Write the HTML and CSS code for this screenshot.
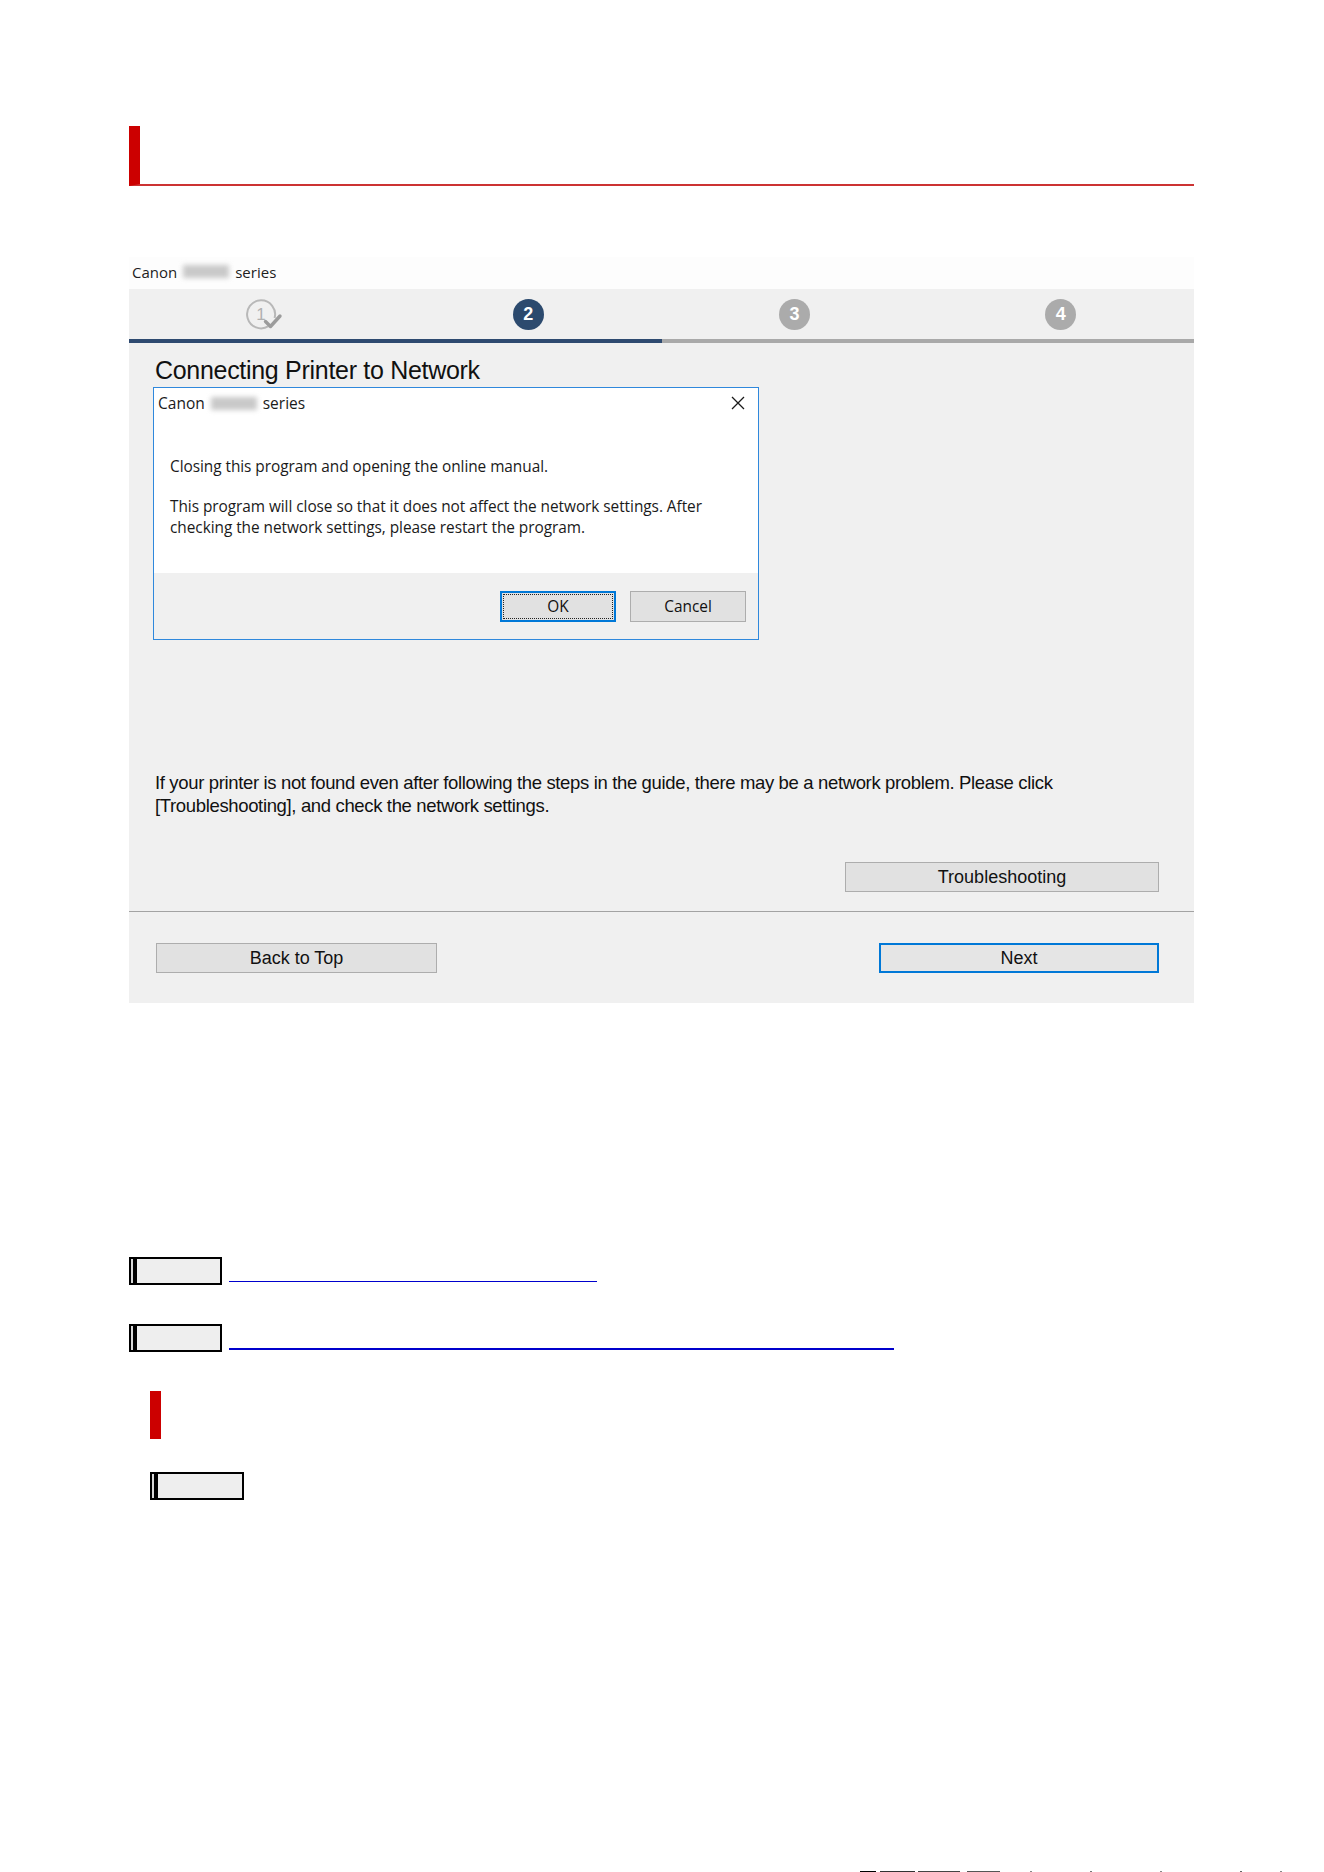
FILE: index.html
```html
<!DOCTYPE html>
<html lang="en">
<head>
<meta charset="utf-8">
<title>Connecting Printer to Network</title>
<link rel="stylesheet" href="styles.css">
</head>
<body>
<div class="page">
  <div class="heading"></div>

  <div class="shot">
    <div class="shot-title">Canon <span class="blur"></span> series</div>
    <div class="steps">
      <div class="step">
        <svg class="done-icon" width="38" height="34" viewBox="0 0 38 34">
          <path d="M22.5 29.2 A14 14 0 1 1 28.6 21" fill="none" stroke="#b8b8b8" stroke-width="2"/>
          <text x="15" y="23" text-anchor="middle" class="svg-num">1</text>
          <path d="M19.5 24.5 L24.5 29.5 L34 19" fill="none" stroke="#9c9c9c" stroke-width="3.4" stroke-linecap="round" stroke-linejoin="round"/>
        </svg>
      </div>
      <div class="step"><span class="num cur">2</span></div>
      <div class="step"><span class="num">3</span></div>
      <div class="step"><span class="num">4</span></div>
    </div>
    <div class="progress"><div class="progress-done"></div></div>

    <div class="shot-body">
      <h1 class="shot-h">Connecting Printer to Network</h1>

      <div class="dialog">
        <div class="dlg-body">
          <div class="dlg-top">
            <div class="dlg-title">Canon <span class="blur blur2"></span> series</div>
            <svg class="dlg-close" width="14" height="14" viewBox="0 0 14 14">
              <path d="M1 1 L13 13 M13 1 L1 13" stroke="#1a1a1a" stroke-width="1.3" fill="none"/>
            </svg>
          </div>
          <p class="dlg-p1">Closing this program and opening the online manual.</p>
          <p class="dlg-p2">This program will close so that it does not affect the network settings. After<br>checking the network settings, please restart the program.</p>
        </div>
        <div class="dlg-foot">
          <button class="dbtn dbtn-ok"><span class="focus">OK</span></button>
          <button class="dbtn">Cancel</button>
        </div>
      </div>

      <p class="hint">If your printer is not found even after following the steps in the guide, there may be a network problem. Please click<br>[Troubleshooting], and check the network settings.</p>

      <div class="ts-row"><button class="wbtn ts">Troubleshooting</button></div>
    </div>

    <div class="shot-foot">
      <button class="wbtn nav">Back to Top</button>
      <button class="wbtn nav next">Next</button>
    </div>
  </div>

  <div class="link-row first">
    <span class="tag"></span>
    <a class="link-line thin" href="#"></a>
  </div>
  <div class="link-row second">
    <span class="tag"></span>
    <a class="link-line thick" href="#"></a>
  </div>

  <div class="sub-heading"></div>
  <div class="tag sub-tag"></div>

  <div class="artifact"></div>
</div>
</body>
</html>
```

FILE: styles.css
```css
html, body {
  margin: 0;
  padding: 0;
  background: #ffffff;
}

.page {
  padding-left: 129px;
  width: 1065px;
  font-family: "Liberation Sans", Arial, sans-serif;
}

.heading {
  margin-top: 126px;
  height: 58px;
  border-left: 11px solid #cc0000;
  border-bottom: 2px solid #cc3333;
}

/* ---------- screenshot ---------- */
.shot {
  margin-top: 71px;
  width: 1065px;
  background: #f0f0f0;
}

.shot-title {
  height: 32px;
  padding: 0 0 3px 3px;
  box-sizing: border-box;
  background: #fdfdfd;
  font-family: "Open Sans", "Noto Sans", sans-serif;
  font-size: 15px;
  color: #1e1e1e;
  display: flex;
  align-items: center;
  gap: 4px;
}

.blur {
  display: inline-block;
  width: 46px;
  height: 13px;
  background: #c9c9c9;
  filter: blur(2.5px);
  margin: 0 2px;
}
.blur2 { width: 46px; }

.steps {
  height: 50px;
  display: grid;
  grid-template-columns: repeat(4, 1fr);
  align-items: center;
  justify-items: center;
}

.step {
  display: flex;
  align-items: center;
  justify-content: center;
}

.done-icon { display: block; margin-left: 5px; }

.svg-num {
  font-family: "Liberation Sans", Arial, sans-serif;
  font-size: 17px;
  fill: #b0b0b0;
}

.num {
  width: 31px;
  height: 31px;
  border-radius: 50%;
  background: #ababab;
  color: #ffffff;
  font-weight: bold;
  font-size: 18px;
  line-height: 31px;
  text-align: center;
}
.num.cur { background: #2c4a6e; }

.progress {
  height: 4px;
  background: #a9a9a9;
}
.progress-done {
  width: 50%;
  height: 4px;
  background: #2e4a70;
}

.shot-body {
  padding: 12px 35px 19px 24px;
}

.shot-h {
  margin: 0 0 2px 2px;
  font-size: 25px;
  line-height: 30px;
  font-weight: normal;
  letter-spacing: -0.3px;
  color: #111111;
}

/* ---------- dialog ---------- */
.dialog {
  width: 604px;
  border: 1px solid #2f88dc;
  background: #ffffff;
  font-family: "Open Sans", "Noto Sans", sans-serif;
  color: #1a1a1a;
}

.dlg-body {
  height: 185px;
}

.dlg-top {
  height: 30px;
  display: flex;
  align-items: center;
  justify-content: space-between;
  padding: 0 13px 0 4px;
}

.dlg-title {
  font-size: 15.5px;
  display: flex;
  align-items: center;
  gap: 4px;
}

.dlg-close { display: block; }

.dlg-p1, .dlg-p2 {
  margin: 0;
  padding-left: 16px;
  font-size: 15.4px;
  line-height: 21px;
  letter-spacing: -0.05px;
}
.dlg-p1 { margin-top: 38px; }
.dlg-p2 { margin-top: 19px; }

.dlg-foot {
  height: 66px;
  box-sizing: border-box;
  background: #f0f0f0;
  display: flex;
  justify-content: flex-end;
  align-items: flex-start;
  gap: 14px;
  padding: 18px 12px 0 0;
}

.dbtn {
  width: 116px;
  height: 31px;
  box-sizing: border-box;
  border: 1px solid #adadad;
  background: #e1e1e1;
  font-family: "Open Sans", "Noto Sans", sans-serif;
  font-size: 15.4px;
  color: #111111;
  padding: 0;
}

.dbtn-ok {
  border: 2px solid #0078d7;
  padding: 1px;
}
.dbtn-ok .focus {
  display: flex;
  align-items: center;
  justify-content: center;
  height: 100%;
  box-sizing: border-box;
  border: 1px dotted #222222;
}

/* ---------- screenshot lower part ---------- */
.hint {
  margin: 131px 0 0 2px;
  font-size: 18.5px;
  line-height: 23px;
  letter-spacing: -0.35px;
  color: #111111;
}

.ts-row {
  margin-top: 45px;
  display: flex;
  justify-content: flex-end;
}

.wbtn {
  height: 30px;
  box-sizing: border-box;
  border: 1px solid #adadad;
  background: #e1e1e1;
  font-family: "Liberation Sans", Arial, sans-serif;
  font-size: 18px;
  color: #111111;
  padding: 0;
}

.ts { width: 314px; }

.shot-foot {
  border-top: 1px solid #a3a3a3;
  padding: 31px 35px 30px 27px;
  display: flex;
  justify-content: space-between;
}

.nav { width: 281px; }
.next {
  width: 280px;
  border: 2px solid #0078d7;
  background: #e5e5e5;
}

/* ---------- links ---------- */
.link-row {
  display: flex;
  align-items: flex-start;
}
.link-row.first { margin-top: 254px; }
.link-row.second { margin-top: 39px; }

.tag {
  display: block;
  width: 93px;
  height: 28px;
  box-sizing: border-box;
  border: 2px solid #000000;
  border-left: none;
  background: linear-gradient(to right, #000 0 2px, #d8d8d8 2px 4px, #000 4px 8px, #eeeeee 8px);
  flex: none;
}

.link-line {
  display: block;
  margin: 24px 0 0 7px;
  background: #0000cc;
}
.link-line.thin { width: 368px; height: 1px; }
.link-line.thick { width: 665px; height: 2px; }

.sub-heading {
  margin: 39px 0 0 21px;
  width: 11px;
  height: 48px;
  background: #cc0000;
}

.sub-tag {
  margin: 33px 0 0 21px;
  width: 94px;
}

.artifact {
  margin: 371px 0 0 731px;
  width: 430px;
  height: 1px;
  background: linear-gradient(to right, #000 0 16px, transparent 16px 20px, #333 20px 55px, transparent 55px 58px, #444 58px 100px, transparent 100px 107px, #555 107px 140px, transparent 140px 170px, #888 170px 172px, transparent 172px 230px, #777 230px 232px, transparent 232px 300px, #888 300px 302px, transparent 302px 380px, #666 380px 382px, transparent 382px 420px, #888 420px 422px, transparent 422px);
}
```
